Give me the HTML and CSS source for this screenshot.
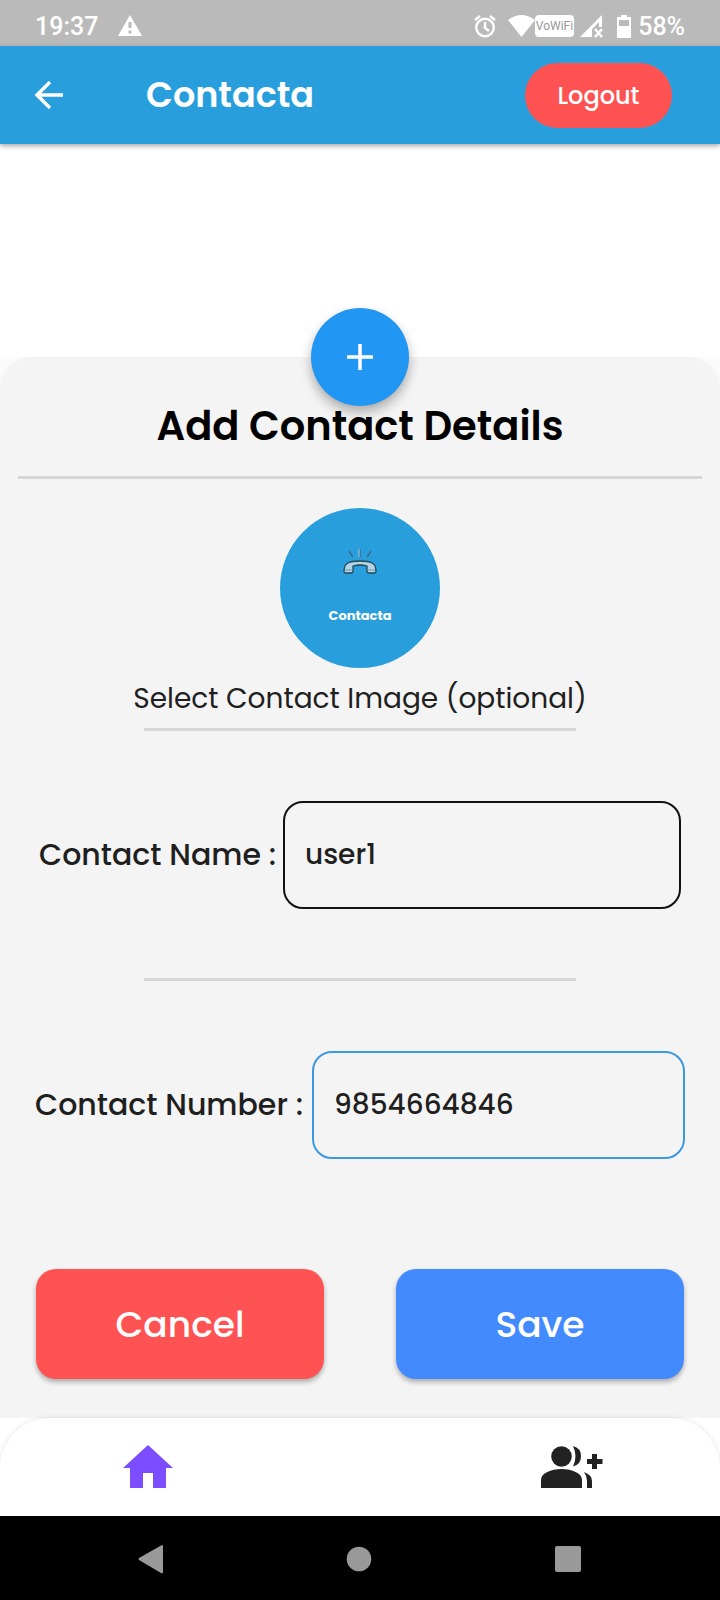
FILE: index.html
```html
<!DOCTYPE html>
<html lang="en">
<head>
<meta charset="utf-8">
<meta name="viewport" content="width=device-width, initial-scale=1">
<title>Contacta</title>
<link rel="stylesheet" href="styles.css">
</head>
<body>
<div class="status">
  <span class="status-time">19:37</span>
  <svg class="status-warning" width="24" height="22" viewBox="0 0 24 22"><path fill="#fff" d="M12 0 24 21H0z"/><path stroke="#bababa" stroke-width="3" d="M12 7v6M12 15.500v3"/></svg>
  <div class="status-right">
    <svg width="22" height="24" viewBox="0 0 22 24" fill="none" stroke="#fff" stroke-width="2.400"><circle cx="11" cy="13.500" r="8.800"/><path d="M11 8v6l4 3M1 6l5-4M21 6l-5-4"/></svg>
    <svg class="wifi" width="27" height="24" viewBox="0 0 27 24"><path fill="#fff" d="M0 6Q13.500-4 27 6L13.500 23z"/></svg>
    <span class="vowifi">VoWiFi</span>
    <svg class="signal" width="24" height="24" viewBox="0 0 24 24"><path fill="#fff" fill-rule="evenodd" d="M0 23 22 1v12h-3V8l-7 7v8z"/><path stroke="#fff" stroke-width="2.500" d="m15 15 7 8m0-8-7 8"/></svg>
    <svg class="battery" width="14" height="23" viewBox="0 0 14 23"><path fill="#fff" d="M4 0h6v2h4v21H0V2h4z"/><path fill="#bababa" d="M2 5h10v6H2z"/></svg>
    <span class="status-percent">58%</span>
  </div>
</div>
<header class="appbar">
  <button class="back" type="button" aria-label="Back"><svg width="28" height="28" viewBox="0 0 28 28" fill="none" stroke="#fff" stroke-width="3.400"><path d="M15 1 2 14l13 13M2 14h26"/></svg></button>
  <h1 class="brand">Contacta</h1>
  <button class="logout" type="button">Logout</button>
</header>
<main class="main">
  <div class="sheet">
  <form class="panel">
    <button class="fab" type="button" aria-label="Add"><svg width="26" height="26" viewBox="0 0 26 26" stroke="#fff" stroke-width="3.500"><path d="M13 0v26M0 13h26"/></svg></button>
    <h2 class="title">Add Contact Details</h2>
    <hr class="rule rule-wide">
    <button class="avatar" type="button" aria-label="Select contact image">
      <svg width="34" height="28" viewBox="0 0 34 28" fill="none"><path d="M6 3l4 6M28 3l-4 6M17 1v8" stroke="#37718d" stroke-width="1.500"/><path d="M16 1v8" stroke="#a9c7d5"/><path d="M1 23C1 15 6 13 17 13s16 2 16 10q0 2-2 2h-5q-2 0-2-2v-5q-7-2-14 0v5q0 2-2 2H3q-2 0-2-2z" fill="#b3d5e3" stroke="#25485a" stroke-width="1.300"/><path d="M2 22h7M25 22h7" stroke="#6d98aa"/></svg>
      <span>Contacta</span>
    </button>
    <p class="hint">Select Contact Image (optional)</p>
    <hr class="rule">
    <div class="field field-name"><label for="name">Contact Name :</label><input id="name" type="text" value="user1"></div>
    <hr class="rule">
    <div class="field field-number"><label for="number">Contact Number :</label><input id="number" type="tel" value="9854664846"></div>
    <div class="actions"><button class="cancel" type="button">Cancel</button><button class="save" type="submit">Save</button></div>
  </form>
  </div>
</main>
<nav class="tabs">
  <button type="button" aria-label="Home"><svg width="50" height="44" viewBox="0 0 50 44"><path fill="#7c4dff" d="M25 0 50 23H43V43H30V28H20V43H7V23H0z"/></svg></button>
  <button type="button" aria-label="Add people"><svg width="62" height="42" viewBox="0 0 62 42" fill="#222"><circle cx="20.500" cy="10.500" r="10.300"/><path d="M0 42V34C0 27 10 23 20.500 23S41 27 41 34v8zM32 0q8 2 8 10.300T32 20.500q5-10 0-20.500zM43 26q8 3 8 9v7h-5v-7q0-5-3-9zM51 8h5v5h5.500v5H56v5h-5v-5h-5v-5h5z"/></svg></button>
</nav>
<nav class="system">
  <button type="button" aria-label="System back"><svg width="26" height="30" viewBox="0 0 26 30"><path fill="#999" d="M24 1q1 0 1 1v26q0 2-2 1L1 16q-1-1 0-2z"/></svg></button>
  <button type="button" aria-label="System home"><svg width="26" height="26" viewBox="0 0 26 26"><circle cx="13" cy="13" r="12.300" fill="#999"/></svg></button>
  <button type="button" aria-label="Recent apps"><svg width="28" height="28" viewBox="0 0 28 28"><rect x="1" y="1" width="26" height="26" rx="2" fill="#999"/></svg></button>
</nav>
</body>
</html>
```
FILE: styles.css
```css
* { box-sizing: border-box; }
body { margin: 0; min-height: 100vh; display: flex; flex-direction: column; background: #fff; color: #1f1f1f; font-family: Poppins, Inter, "Open Sans", sans-serif; }
button { border: 0; padding: 0; background: none; color: #fff; font-family: inherit; cursor: pointer; }
svg { display: block; }
h1, h2, p { margin: 0; }

.status { height: 46px; padding: 6px 35px 0; display: flex; align-items: center; background: #bababa; color: #fff; font-family: Roboto, sans-serif; font-size: 25px; font-weight: 500; }
.status-warning { margin-left: 20px; }
.status-right { margin-left: auto; display: flex; align-items: center; }
.wifi { margin-left: 12px; }
.vowifi { padding: 0 1px; border-radius: 4px; background: #fff; color: #999; font-family: Roboto, sans-serif; font-size: 12px; line-height: 22px; font-weight: 400; }
.signal { margin-left: 6px; }
.battery { margin-left: 13px; }
.status-percent { margin-left: 7px; }

.appbar { position: relative; height: 98px; padding: 0 48px 0 35px; display: flex; align-items: center; background: #289fdc; color: #fff; box-shadow: 0 2px 5px rgba(0, 0, 0, .35); }
.brand { margin-left: 83px; font-size: 35px; line-height: 50px; font-weight: 600; }
.logout { margin-left: auto; width: 147px; height: 65px; border-radius: 33px; background: #ff5252; font-size: 24px; font-weight: 500; }

.main { padding-top: 213px; }
.sheet { background: #fafafa; }
.panel { position: relative; padding: 42px 18px 39px; border-radius: 32px 32px 0 0; background: #f4f4f4; }
.fab { position: absolute; top: -49px; left: calc(50% - 49px); width: 98px; height: 98px; border-radius: 50%; display: grid; place-items: center; background: #2196f3; box-shadow: 0 6px 12px rgba(0, 0, 0, .3); }
.title { position: relative; color: #000; font-size: 40px; line-height: 54px; font-weight: 600; text-align: center; }
.rule { width: 432px; max-width: 100%; height: 3px; margin: 0 auto; border: 0; background: #d6d6d6; }
.rule-wide { width: auto; margin-top: 23px; }
.avatar { width: 160px; height: 160px; margin: 29px auto 0; padding-top: 40px; border-radius: 50%; display: flex; flex-direction: column; align-items: center; gap: 31px; background: #289fdc; font-size: 13px; line-height: 18px; font-weight: 700; }
.hint { padding: 10px 0 8px; font-size: 28px; line-height: 42px; text-align: center; }

.field { display: flex; align-items: center; margin: 70px 0 69px; }
.field label { flex: none; font-size: 30px; font-weight: 500; }
.field input { flex: 1; min-width: 0; height: 108px; padding: 0 20px; border: 2px solid #111; border-radius: 20px; background: transparent; color: #1f1f1f; font-family: inherit; font-size: 28px; font-weight: 500; outline: 0; }
.field-name { padding: 0 21px; }
.field-name label { width: 244px; }
.field-number { padding: 0 17px; }
.field-number label { width: 277px; }
.field-number input { border-color: #3d98e3; }

.actions { display: grid; grid-template-columns: 1fr 1fr; gap: 72px; margin-top: 110px; padding: 0 18px; }
.actions button { height: 110px; border-radius: 20px; font-size: 36px; font-weight: 500; box-shadow: 0 3px 5px rgba(0, 0, 0, .3); }
.cancel { background: #ff5252; }
.actions .save { background: #448aff; }

.tabs { position: relative; height: 98px; padding: 0 117px 0 123px; display: flex; align-items: center; justify-content: space-between; border-radius: 50px 50px 0 0; background: #fff; box-shadow: 0 0 5px rgba(0, 0, 0, .12); }
.system { position: relative; flex: 1 0 85px; padding: 0 138px; display: flex; align-items: center; justify-content: space-between; background: #000; }
```
